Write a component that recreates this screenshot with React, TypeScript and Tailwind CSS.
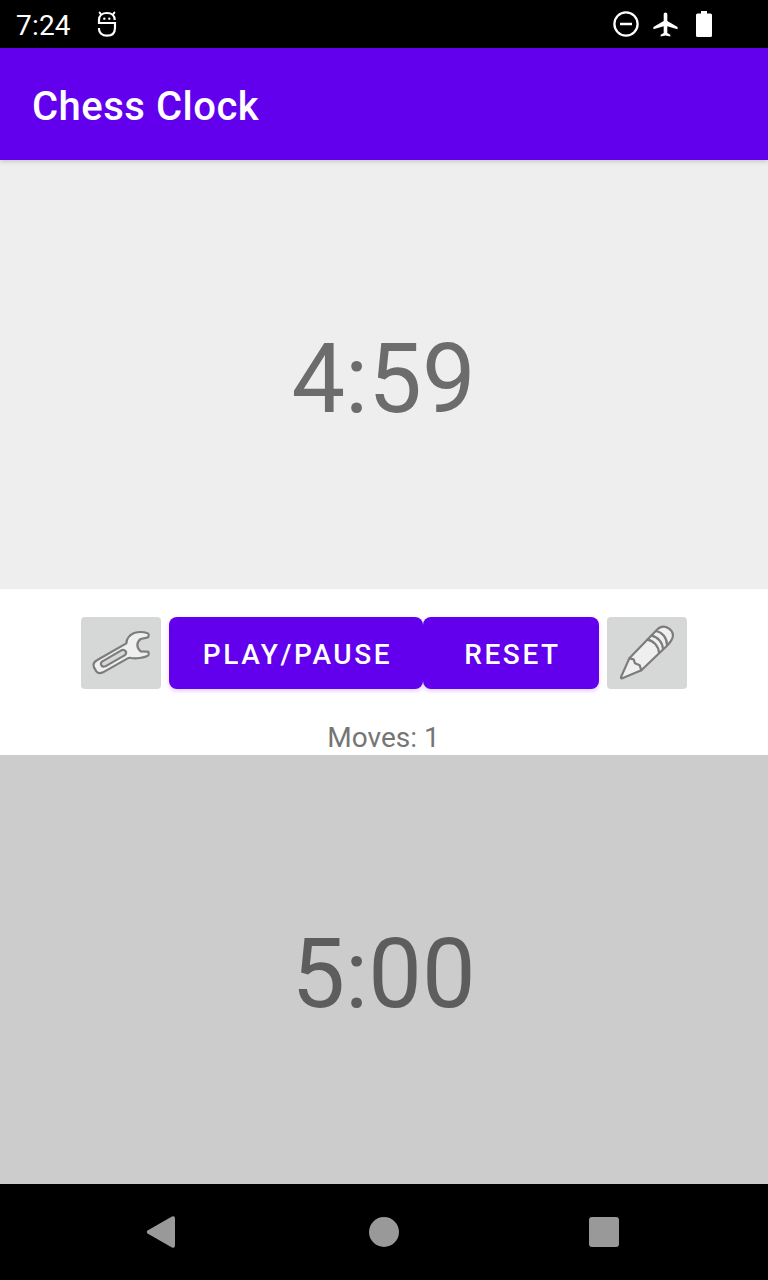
import React from "react";

function StatusBar() {
  return (
    <header className="flex h-12 shrink-0 items-center bg-black pl-4 pr-[50px] text-white">
      <span className="w-[78px] pt-[3px] text-[28px] leading-8 tracking-[0.2px]">7:24</span>
      <svg className="h-8 w-[26px]" viewBox="0 0 78 96" fill="none" stroke="white">
        <path d="M62 36C62 23 53 15 39 15S15 23 15 36V45H63V59C63 74 54 83 39 83S15 74 15 63V60" strokeWidth="6.500" />
        <path d="M20 18L17 14M58 18L61 14" strokeWidth="6" strokeLinecap="round" />
        <circle cx="31" cy="32" r="3.500" fill="white" stroke="none" />
        <circle cx="46" cy="32" r="3.500" fill="white" stroke="none" />
      </svg>
      <div className="ml-auto flex items-center">
        <svg className="h-[28px] w-[28px]" viewBox="0 0 28 28" fill="none" stroke="white">
          <circle cx="13" cy="14" r="11.6" strokeWidth="2.3" />
          <path d="M7 14H19" strokeWidth="2.5" />
        </svg>
        <svg className="ml-[10.500px] h-[29px] w-[29px]" viewBox="0 0 24 24" fill="white">
          <path d="M22 16v-2l-8.5-5V3.5c0-.83-.67-1.5-1.5-1.5s-1.5.67-1.5 1.5V9L2 14v2l8.5-2.5V19L8 20.500V22l4-1 4 1v-1.500L13.500 19v-5.500L22 16z" />
        </svg>
        <svg className="ml-[10px] h-[28px] w-[28px]" viewBox="0 0 28 28" fill="white">
          <path d="M11 1H17V3.500H20.500Q22 3.500 22 5V25.500Q22 27 20.500 27H7.500Q6 27 6 25.500V5Q6 3.500 7.500 3.500H11Z" />
        </svg>
      </div>
    </header>
  );
}

function WrenchIcon() {
  return (
    <svg className="h-[72px] w-20" viewBox="18 21 240 216" fill="#efefef" stroke="#7c7c7c" strokeWidth="6.500" strokeLinejoin="round">
      <path d="M216 69C207 66 190 65 177 69C163 75 155 85 154 100L67 150C56 156 53 163 57 172L64 184C69 191 76 191 84 187L158 145Q163 142 169 144C183 147 207 143 217 138Q221 137 221 132V129Q221 125 217 125L197 124C190 118 187 112 187 104C188 96 191 91 197 87L216 83Q221 82 221 78V74Q221 70 216 69Z" />
      <path fill="#d6d7d7" d="M81 155L139 121Q145 118 149 121Q156 125 152 133Q151 135 147 137L91 169Q83 172 79 166Q76 159 81 155Z" />
    </svg>
  );
}

function PencilIcon() {
  return (
    <svg className="h-[72px] w-20" viewBox="51 21 240 216" fill="#efefef" stroke="#7c7c7c" strokeWidth="6.500" strokeLinejoin="round" strokeLinecap="round">
      <path d="M118 145L198 62C207 52 217 48 228 51C240 56 249 66 249 77C248 88 241 97 231 107L154 181L97 205Q92 207 93 201Z" />
      <path fill="none" d="M118 145L131 148L135 160L149 166L154 181M172 89C190 92 206 108 207 129M184 77C203 80 218 97 219 117M198 63C217 66 231 84 231 105" />
    </svg>
  );
}

function IconButton({ label, children }: { label: string; children: React.ReactNode }) {
  return (
    <button aria-label={label} className="h-[72px] w-20 rounded-[4px] bg-[#d6d7d7]">
      {children}
    </button>
  );
}

const actionClass =
  "h-[72px] rounded-[8px] bg-[#6200ee] pl-[3px] pt-[3px] text-[28px] font-medium tracking-[2.6px] text-white shadow-[0_2px_4px_rgba(98,0,238,0.2)]";

export default function App() {
  return (
    <main className="flex h-[1280px] w-[768px] flex-col overflow-hidden bg-white font-['Roboto',sans-serif]">
      <StatusBar />
      <div className="relative flex h-28 shrink-0 items-center bg-[#6200ee] pl-8 pt-[5px] shadow-[0_1px_5px_rgba(0,0,0,0.2)]">
        <h1 className="text-[40px] font-medium leading-[48px] tracking-[0.5px] text-white">Chess Clock</h1>
      </div>
      <section className="flex h-[429px] shrink-0 items-center justify-center bg-[#eeeeee] pr-px pt-[11px] text-[95.500px] leading-none text-[#6c6c6c]">
        4:59
      </section>
      <section className="flex h-[166px] shrink-0 flex-col items-center pt-7">
        <div className="flex">
          <IconButton label="Settings"><WrenchIcon /></IconButton>
          <button className={`${actionClass} ml-2 w-[254px]`}>PLAY/PAUSE</button>
          <button className={`${actionClass} mr-2 w-[176px]`}>RESET</button>
          <IconButton label="Edit"><PencilIcon /></IconButton>
        </div>
        <p className="mt-[33px] pr-px text-[28px] leading-8 text-[#757575]">Moves: 1</p>
      </section>
      <section className="flex h-[429px] shrink-0 items-center justify-center bg-[#cccccc] pr-px pt-[11px] text-[95.500px] leading-none text-[#5d5d5d]">
        5:00
      </section>
      <nav className="flex h-24 items-center bg-black pl-[146px] text-[#999999]">
        <svg className="h-8 w-[30px]" viewBox="0 0 30 32" fill="currentColor">
          <path d="M1.500 14.500L26 .500Q29 -.500 29 2.500V29.500Q29 32.500 26 31.500L1.500 17.500Q.200 16 1.500 14.500Z" />
        </svg>
        <div className="ml-[193px] h-[30px] w-[30px] rounded-full bg-[#999999]" />
        <div className="ml-[190px] h-[30px] w-[30px] rounded-[3px] bg-[#999999]" />
      </nav>
    </main>
  );
}
